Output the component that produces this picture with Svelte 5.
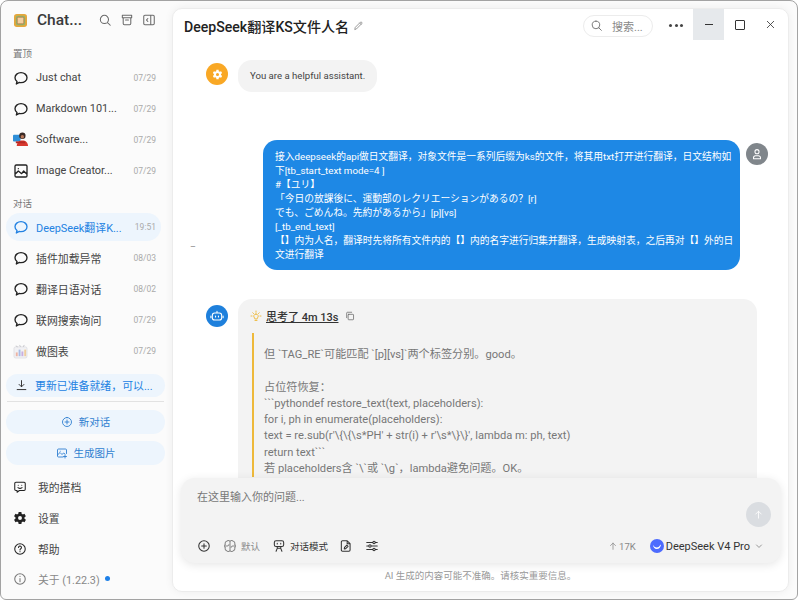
<script>
  const icons = {
    chat: 'M12 4c-5 0-9 3.300-9 7.500 0 2.300 1.200 4.300 3 5.700L5 21l4.500-2.300c.8.200 1.600.300 2.500.300 5 0 9-3.300 9-7.500S17 4 12 4z',
    search: 'M11 4a7 7 0 1 0 0 14 7 7 0 0 0 0-14zM16 16l5 5',
    archive: 'M4 4h16v4H4zM5.500 8v10a2 2 0 0 0 2 2h9a2 2 0 0 0 2-2V8M9.500 12h5',
    panel: 'M5 4h14a2 2 0 0 1 2 2v12a2 2 0 0 1-2 2H5a2 2 0 0 1-2-2V6a2 2 0 0 1 2-2zM15 4v16M10 9.500 7.500 12l2.500 2.500',
    image: 'M5 3h14a2 2 0 0 1 2 2v14a2 2 0 0 1-2 2H5a2 2 0 0 1-2-2V5a2 2 0 0 1 2-2zM3 17l5-5 5 4 3-4 5 5M8 8.500h.01',
    download: 'M12 3v11M7.500 10l4.500 4.500 4.500-4.500M4 19.500h16',
    plusCircle: 'M12 3a9 9 0 1 0 0 18 9 9 0 0 0 0-18zM12 8v8M8 12h8',
    imagePlus: 'M14 20H5a2 2 0 0 1-2-2V6a2 2 0 0 1 2-2h14a2 2 0 0 1 2 2v7M3 16l5-5 4 4 3-3 3 2M8.500 8.500h.01M18 16v6M15 19h6',
    persona: 'M5 4h14a2 2 0 0 1 2 2v10a2 2 0 0 1-2 2h-8l-4 3v-3H5a2 2 0 0 1-2-2V6a2 2 0 0 1 2-2zM9 9h.01M15 9h.01M8.500 13c2 1.600 5 1.600 7 0',
    help: 'M12 3a9 9 0 1 0 0 18 9 9 0 0 0 0-18zM9.500 9.500a2.500 2.500 0 1 1 3.800 2.100c-.8.500-1.300 1-1.300 2M12 16.500h.01',
    info: 'M12 3a9 9 0 1 0 0 18 9 9 0 0 0 0-18zM12 11v5.500M12 7.500h.01',
    pencil: 'M4 20l1-4L16 5a2 2 0 0 1 3 3L8 19zM14.500 6.500l3 3',
    user: 'M12 4.500a3.500 3.500 0 1 0 0 7 3.500 3.500 0 0 0 0-7zM6 20v-1.500A3.500 3.500 0 0 1 9.500 15h5a3.500 3.500 0 0 1 3.500 3.500V20z',
    bot: 'M8 7h8a4 4 0 0 1 4 4v4a4 4 0 0 1-4 4H8a4 4 0 0 1-4-4v-4a4 4 0 0 1 4-4zM12 4v3M9.500 12v1.500M14.500 12v1.500M1.500 12v3M22.500 12v3',
    bulb: 'M12 8a4.500 4.500 0 0 0-2.500 8.200V18h5v-1.800A4.500 4.500 0 0 0 12 8zM10 21h4M12 2v2.500M4 12H2M22 12h-2M5.500 5.500l1.700 1.700M18.500 5.500l-1.700 1.700',
    copy: 'M9 8h10a1.500 1.500 0 0 1 1.500 1.500v10A1.500 1.500 0 0 1 19 21H9a1.500 1.500 0 0 1-1.500-1.500v-10A1.500 1.500 0 0 1 9 8zM4 16V5a2 2 0 0 1 2-2h10',
    brain: 'M12 5a3 3 0 0 0-5.500-1A3.500 3.500 0 0 0 4 9a4 4 0 0 0 0 6 3.500 3.500 0 0 0 2.500 5A3 3 0 0 0 12 19zM12 5a3 3 0 0 1 5.500-1A3.500 3.500 0 0 1 20 9a4 4 0 0 1 0 6 3.500 3.500 0 0 1-2.500 5A3 3 0 0 1 12 19zM4 12h4l2-2M20 12h-4l-2 2',
    robot: 'M7 3h10a3 3 0 0 1 3 3v4a3 3 0 0 1-3 3H7a3 3 0 0 1-3-3V6a3 3 0 0 1 3-3zM9 7.500v1M15 7.500v1M9 13v3h6v-3M9 16l-2 5M15 16l2 5',
    doc: 'M6 3h8l5 5v11a2 2 0 0 1-2 2H6a2 2 0 0 1-2-2V5a2 2 0 0 1 2-2zM14 3v5h5M9 17l.5-2.500 4-4 2 2-4 4z',
    sliders: 'M3 6h10M18 6h3M3 12h3M11 12h10M3 18h10M18 18h3M15.500 4a2 2 0 1 0 0 4 2 2 0 0 0 0-4zM8.500 10a2 2 0 1 0 0 4 2 2 0 0 0 0-4zM15.500 16a2 2 0 1 0 0 4 2 2 0 0 0 0-4z',
    arrowUp: 'M12 20V5M6 11l6-6 6 6',
    chevron: 'M6 9.500l6 6 6-6',
    close: 'M5 5l14 14M19 5L5 19'
  };

  const gear = 'M19.400 13a7.600 7.600 0 0 0 0-2l2-1.600-2-3.400-2.400 1a7.500 7.500 0 0 0-1.700-1L15 3.500h-4l-.4 2.500a7.500 7.500 0 0 0-1.700 1l-2.400-1-2 3.400 2 1.600a7.600 7.600 0 0 0 0 2l-2 1.600 2 3.400 2.400-1a7.500 7.500 0 0 0 1.700 1l.4 2.500h4l.4-2.500a7.500 7.500 0 0 0 1.700-1l2.400 1 2-3.400zM13 14.800a2.800 2.800 0 1 1 0-5.600 2.800 2.800 0 0 1 0 5.600z';

  const pinned = [
    { icon: 'chat', title: 'Just chat', time: '07/29' },
    { icon: 'chat', title: 'Markdown 101...', time: '07/29' },
    { avatar: 'person', title: 'Software...', time: '07/29' },
    { icon: 'image', title: 'Image Creator...', time: '07/29' }
  ];

  const chats = [
    { icon: 'chat', title: 'DeepSeek翻译K...', time: '19:51', active: true },
    { icon: 'chat', title: '插件加载异常', time: '08/03' },
    { icon: 'chat', title: '翻译日语对话', time: '08/02' },
    { icon: 'chat', title: '联网搜索询问', time: '07/29' },
    { avatar: 'chart', title: '做图表', time: '07/29' }
  ];

  const userLines = [
    '接入deepseek的api做日文翻译，对象文件是一系列后缀为ks的文件，将其用txt打开进行翻译，日文结构如',
    '下[tb_start_text mode=4 ]',
    '#【ユリ】',
    '「今日の放課後に、運動部のレクリエーションがあるの？[r]',
    'でも、ごめんね。先約があるから」[p][vs]',
    '[_tb_end_text]',
    '【】内为人名，翻译时先将所有文件内的【】内的名字进行归集并翻译，生成映射表，之后再对【】外的日',
    '文进行翻译'
  ];

  const thinkLines = [
    '但 `TAG_RE`可能匹配 `[p][vs]`两个标签分别。good。',
    '',
    '占位符恢复：',
    '```pythondef restore_text(text, placeholders):',
    'for i, ph in enumerate(placeholders):',
    "text = re.sub(r'\\{\\{\\s*PH' + str(i) + r'\\s*\\}\\}', lambda m: ph, text)",
    'return text```',
    '若 placeholders含 `\\`或 `\\g`，lambda避免问题。OK。'
  ];
</script>

{#snippet icon(name, size = 14)}
  <svg class="icon" width={size} height={size} viewBox="0 0 24 24" aria-hidden="true"><path d={icons[name]} /></svg>
{/snippet}

{#snippet gearIcon(size)}
  <svg width={size} height={size} viewBox="3 2 20 20" aria-hidden="true"><path d={gear} fill="currentColor" fill-rule="evenodd" /></svg>
{/snippet}

{#snippet row(item)}
  <div class="row" class:active={item.active}>
    {#if item.avatar === 'person'}
      <svg class="lead" width="15" height="15" viewBox="0 0 16 16" aria-hidden="true">
        <rect x="0" y="3" width="8" height="7" rx="1" fill="#2f8fd8" />
        <circle cx="10" cy="4" r="3.400" fill="#3a2a25" />
        <circle cx="10" cy="5" r="1.800" fill="#b9785a" />
        <path d="M4 15c0-4 2.500-6 6-6s6 2 6 6z" fill="#d8392f" />
        <rect x="3" y="10" width="10" height="2" fill="#b52a25" />
      </svg>
    {:else if item.avatar === 'chart'}
      <svg class="lead" width="15" height="15" viewBox="0 0 16 16" aria-hidden="true">
        <rect x="1" y="3" width="14" height="12" rx="2" fill="#f1f1f4" stroke="#d5d5da" stroke-width=".6" />
        <path d="M3 2l2 1M7 1l1 2M12 1l-1 2" stroke="#b9b9c0" stroke-width=".8" />
        <rect x="3" y="9" width="2" height="4" fill="#eeb3a2" />
        <rect x="6" y="6" width="2" height="7" fill="#a9bde6" />
        <rect x="9" y="8" width="2" height="5" fill="#c8aee0" />
        <rect x="12" y="6" width="2" height="7" fill="#efcd9c" />
      </svg>
    {:else}
      <span class="lead">{@render icon(item.icon, 16)}</span>
    {/if}
    <span class="row-title">{item.title}</span>
    <span class="row-time">{item.time}</span>
  </div>
{/snippet}

<div class="window">
  <aside class="sidebar">
    <header class="brand">
      <svg class="logo" width="13" height="13" viewBox="0 0 14 14" aria-hidden="true">
        <rect width="14" height="14" rx="3" fill="#e4a73c" />
        <rect x="2" y="2" width="10" height="10" rx="2" fill="#8fb36d" />
        <rect x="3.500" y="3.500" width="7" height="7" rx="1" fill="#f2cfa0" stroke="#b96f3c" stroke-width=".7" />
      </svg>
      <span class="brand-name">Chat...</span>
      <span class="brand-tools">
        {@render icon('search', 14)}
        {@render icon('archive', 14)}
        {@render icon('panel', 14)}
      </span>
    </header>

    <div class="section-label first">置顶</div>
    {#each pinned as item}{@render row(item)}{/each}

    <div class="section-label">对话</div>
    {#each chats as item}{@render row(item)}{/each}

    <div class="update">{@render icon('download', 13)}<span>更新已准备就绪，可以...</span></div>
    <div class="divider"></div>
    <button class="pill">{@render icon('plusCircle', 12)}<span>新对话</span></button>
    <button class="pill">{@render icon('imagePlus', 12)}<span>生成图片</span></button>

    <nav class="bottom">
      <div class="nav-item">{@render icon('persona', 14)}<span>我的搭档</span></div>
      <div class="nav-item">{@render gearIcon(14)}<span>设置</span></div>
      <div class="nav-item">{@render icon('help', 14)}<span>帮助</span></div>
      <div class="nav-item about">{@render icon('info', 14)}<span>关于 (1.22.3)</span><i class="dot"></i></div>
    </nav>
  </aside>

  <main class="panel">
    <header class="topbar">
      <h1>DeepSeek翻译KS文件人名</h1>
      <span class="edit">{@render icon('pencil', 11)}</span>
      <div class="search">{@render icon('search', 13)}<span>搜索...</span></div>
      <div class="dots"><i></i><i></i><i></i></div>
      <div class="winbtns">
        <button class="winbtn hover" aria-label="最小化"><i class="min"></i></button>
        <button class="winbtn" aria-label="最大化"><i class="max"></i></button>
        <button class="winbtn" aria-label="关闭">{@render icon('close', 11)}</button>
      </div>
    </header>

    <div class="messages">
      <div class="msg system">
        <span class="avatar orange">{@render gearIcon(11)}</span>
        <div class="bubble grey">You are a helpful assistant.</div>
      </div>

      <div class="msg user">
        <span class="stray">–</span>
        <div class="bubble blue">
          {#each userLines as line}<div>{line}</div>{/each}
        </div>
        <span class="avatar gray">{@render icon('user', 14)}</span>
      </div>

      <div class="msg assistant">
        <span class="avatar bluebg">{@render icon('bot', 14)}</span>
        <div class="bubble grey answer">
          <div class="think-head">
            <span class="bulb">{@render icon('bulb', 12)}</span>
            <u>思考了 4m 13s</u>
            <span class="copy">{@render icon('copy', 10)}</span>
          </div>
          <blockquote>
            {#each thinkLines as line}<div class="think-line">{line}</div>{/each}
          </blockquote>
        </div>
      </div>
    </div>

    <div class="composer">
      <div class="placeholder">在这里输入你的问题...</div>
      <div class="send">{@render icon('arrowUp', 11)}</div>
      <div class="toolbar">
        <span class="tool">{@render icon('plusCircle', 14)}</span>
        <span class="tool muted">{@render icon('brain', 14)}<span>默认</span></span>
        <span class="tool strong">{@render icon('robot', 14)}<span>对话模式</span></span>
        <span class="tool doc">{@render icon('doc', 14)}</span>
        <span class="tool">{@render icon('sliders', 14)}</span>
        <span class="spacer"></span>
        <span class="tokens">{@render icon('arrowUp', 10)}<span>17K</span></span>
        <span class="model">
          <svg width="14" height="14" viewBox="0 0 14 14" aria-hidden="true">
            <circle cx="7" cy="7" r="7" fill="#4d6bfe" />
            <path d="M3 6c1.500 2.500 4 3 5.500 2 1-.7 1.300-1.800 2.500-2.500-.2 2.500-1.800 4.500-4.300 4.500C4.500 10 3.300 8 3 6z" fill="#fff" />
          </svg>
          <span>DeepSeek V4 Pro</span>
          {@render icon('chevron', 10)}
        </span>
      </div>
    </div>

    <footer class="disclaimer">AI 生成的内容可能不准确。请核实重要信息。</footer>
  </main>
</div>

<style>
  :global(body) {
    margin: 0;
    background: #fff;
  }

  .window {
    box-sizing: border-box;
    width: 798px;
    height: 600px;
    display: flex;
    overflow: hidden;
    background: #fbfbfb;
    border: 1px solid #a3a3a3;
    border-radius: 8px 8px 6px 6px;
    font-family: Roboto, "Noto Sans CJK SC", sans-serif;
    color: #333;
  }

  .icon {
    display: block;
    flex: none;
    fill: none;
    stroke: currentColor;
    stroke-width: 1.800;
    stroke-linecap: round;
    stroke-linejoin: round;
  }

  /* sidebar */
  .sidebar {
    width: 170px;
    flex: none;
    display: flex;
    flex-direction: column;
    padding: 0 10px 0 5px;
    box-sizing: border-box;
  }

  .brand {
    height: 38px;
    display: flex;
    align-items: center;
    padding-left: 8px;
  }

  .logo {
    flex: none;
  }

  .brand-name {
    margin-left: 10px;
    font-size: 15.500px;
    font-weight: 500;
    color: #3a3a3a;
  }

  .brand-tools {
    margin-left: auto;
    margin-right: 5px;
    display: flex;
    gap: 8px;
    color: #6b6b6b;
  }

  .section-label {
    height: 15px;
    margin-top: 10px;
    padding-left: 7px;
    font-size: 9.500px;
    line-height: 15px;
    color: #777;
  }

  .section-label.first {
    margin-top: 8px;
    line-height: 13px;
  }

  .row {
    height: 31.100px;
    display: flex;
    align-items: center;
    padding: 0 5px 0 7px;
    font-size: 10.900px;
    color: #444;
  }

  .row.active {
    height: 28px;
    margin: 1.500px 0 1.600px;
    background: #edf5fd;
    border-radius: 14px;
    color: #2382e2;
  }

  .lead {
    flex: none;
    width: 15px;
    display: block;
    color: #222;
  }

  .lead .icon {
    stroke-width: 2;
  }

  .row.active .lead {
    color: #2382e2;
  }

  .row-title {
    margin-left: 8px;
    white-space: nowrap;
  }

  .row-time {
    margin-left: auto;
    font-size: 8.500px;
    color: #aaa;
  }

  .update {
    flex: none;
    height: 23px;
    margin-top: 7px;
    width: 159px;
    padding-left: 9px;
    box-sizing: border-box;
    display: flex;
    align-items: center;
    gap: 7px;
    background: #edf5fd;
    border-radius: 12px;
    font-size: 10.900px;
    color: #2382e2;
  }

  .update .icon {
    color: #333;
  }

  .divider {
    flex: none;
    height: 1px;
    margin: 4px 0 0 1px;
    width: 157px;
    background: #e2e2e2;
  }

  .pill {
    flex: none;
    width: 159px;
    height: 24px;
    margin: 8px 0 0;
    padding: 0;
    border: 0;
    display: flex;
    align-items: center;
    justify-content: center;
    gap: 6px;
    background: #edf5fd;
    border-radius: 12px;
    font: inherit;
    font-size: 10.500px;
    color: #2f7fd0;
  }

  .pill + .pill {
    margin-top: 7px;
  }

  .bottom {
    margin-top: 7px;
    display: flex;
    flex-direction: column;
  }

  .nav-item {
    height: 31px;
    display: flex;
    align-items: center;
    gap: 11px;
    padding-left: 7px;
    font-size: 10.800px;
    color: #444;
  }

  .nav-item :global(svg) {
    color: #222;
    flex: none;
  }

  .about {
    height: 30px;
    margin-top: -1px;
  }

  .about span {
    color: #888;
  }

  .about .icon {
    color: #777;
  }

  .dot {
    width: 5px;
    height: 5px;
    margin-left: -6px;
    border-radius: 50%;
    background: #1e80e8;
  }

  /* main panel */
  .panel {
    position: relative;
    flex: none;
    width: 617px;
    height: 584px;
    margin: 7px 0 0 1px;
    display: flex;
    flex-direction: column;
    background: #fff;
    border: 1px solid #ececec;
    border-radius: 10px;
    box-shadow: 0 0 8px rgba(0, 0, 0, .06);
    overflow: hidden;
    box-sizing: border-box;
  }

  .topbar {
    height: 33px;
    flex: none;
    display: flex;
    align-items: center;
    padding-left: 11px;
  }

  h1 {
    margin: 0;
    font-size: 14.100px;
    font-weight: 500;
    color: #222;
    white-space: nowrap;
  }

  .edit {
    margin-left: 4px;
    color: #888;
  }

  .search {
    box-sizing: border-box;
    width: 70px;
    height: 22px;
    margin-left: auto;
    padding-left: 6px;
    display: flex;
    align-items: center;
    gap: 9px;
    border: 1px solid #ececec;
    border-radius: 11px;
    font-size: 11px;
    color: #888;
  }

  .search .icon {
    color: #777;
  }

  .dots {
    display: flex;
    gap: 2.500px;
    margin: 0 10px 0 16px;
  }

  .dots i {
    width: 3px;
    height: 3px;
    border-radius: 50%;
    background: #444;
  }

  .winbtns {
    display: flex;
    align-self: flex-start;
    margin-right: 2px;
  }

  .winbtn {
    width: 31px;
    height: 31px;
    padding: 0;
    border: 0;
    background: none;
    display: flex;
    align-items: center;
    justify-content: center;
    color: #333;
  }

  .winbtn.hover {
    background: #e6e9ec;
  }

  .min {
    width: 8px;
    height: 1px;
    background: #333;
  }

  .max {
    box-sizing: border-box;
    width: 10px;
    height: 10px;
    border: 1px solid #333;
    border-radius: 1px;
  }

  .messages {
    flex: 1;
    min-height: 0;
    overflow: hidden;
    padding: 18px 31px 0 33px;
  }

  .msg {
    display: flex;
    position: relative;
    align-items: flex-start;
    gap: 10px;
  }

  .avatar {
    width: 22px;
    height: 22px;
    flex: none;
    margin-top: 3px;
    border-radius: 50%;
    display: flex;
    align-items: center;
    justify-content: center;
    color: #fff;
  }

  .orange {
    background: #f9a825;
  }

  .gray {
    background: #80868b;
  }

  .bluebg {
    background: #1e80dc;
  }

  .bubble {
    box-sizing: border-box;
    border-radius: 14px;
  }

  .grey {
    background: #f3f3f3;
    color: #444;
  }

  .system .bubble {
    padding: 0 12px;
    height: 32px;
    line-height: 32px;
    font-size: 9.600px;
  }

  .user {
    margin-top: 48px;
    margin-right: -11px;
    justify-content: flex-end;
    gap: 6px;
  }

  .stray {
    position: absolute;
    left: -16px;
    top: 102px;
    font-size: 9px;
    color: #888;
  }

  .blue {
    flex: none;
    width: 477px;
    padding: 10px 12px 8px;
    background: #1e88e5;
    color: #fff;
    font-size: 9.750px;
    line-height: 14px;
    white-space: nowrap;
  }

  .assistant {
    margin-top: 29px;
  }

  .assistant .avatar {
    margin-top: 6px;
  }

  .answer {
    width: 519px;
    height: 300px;
    padding: 8px 12px 0 14px;
    color: #777;
  }

  .think-head {
    display: flex;
    align-items: center;
    height: 18px;
    font-size: 11px;
    font-weight: 500;
    color: #333;
  }

  .bulb {
    color: #eeb93a;
    margin-left: -2px;
    margin-right: 4px;
  }

  .copy {
    margin-left: 7px;
    color: #666;
  }

  blockquote {
    margin: 8px 0 0;
    padding: 14px 0 0 10px;
    border-left: 2.500px solid #eeb93a;
    font-size: 11.150px;
    line-height: 16.300px;
    color: #777;
  }

  .think-line {
    min-height: 16.300px;
    white-space: nowrap;
  }

  /* composer floats over the message list */
  .composer {
    position: absolute;
    left: 8px;
    top: 469px;
    box-sizing: border-box;
    width: 600px;
    height: 85px;
    padding: 12px 16px 0;
    background: #f3f3f3;
    border-radius: 14px;
    box-shadow: 0 2px 10px rgba(0, 0, 0, .1);
  }

  .placeholder {
    font-size: 11px;
    line-height: 16px;
    color: #777;
  }

  .send {
    position: absolute;
    right: 10px;
    top: 24px;
    width: 25px;
    height: 25px;
    border-radius: 50%;
    background: #dadde1;
    color: #fff;
    display: flex;
    align-items: center;
    justify-content: center;
  }

  .toolbar {
    position: absolute;
    left: 16px;
    right: 15px;
    top: 59px;
    height: 18px;
    display: flex;
    align-items: center;
    gap: 12px;
    color: #333;
  }

  .tool {
    display: flex;
    align-items: center;
    gap: 4px;
    font-size: 9.500px;
  }

  .doc {
    margin-left: -1px;
  }

  .muted {
    color: #888;
  }

  .strong {
    color: #333;
  }

  .spacer {
    flex: 1;
  }

  .tokens {
    display: flex;
    align-items: center;
    margin-right: 4px;
    font-size: 9.500px;
    color: #888;
  }

  .tokens .icon {
    margin-right: 1px;
  }

  .model {
    display: flex;
    align-items: center;
    gap: 2px;
    margin-left: -2px;
    margin-right: 2px;
    font-size: 11px;
    color: #333;
  }

  .model .icon {
    color: #777;
    margin-left: 2px;
  }

  .disclaimer {
    flex: none;
    height: 29px;
    text-align: center;
    line-height: 27px;
    font-size: 9.500px;
    color: #999;
  }
</style>
